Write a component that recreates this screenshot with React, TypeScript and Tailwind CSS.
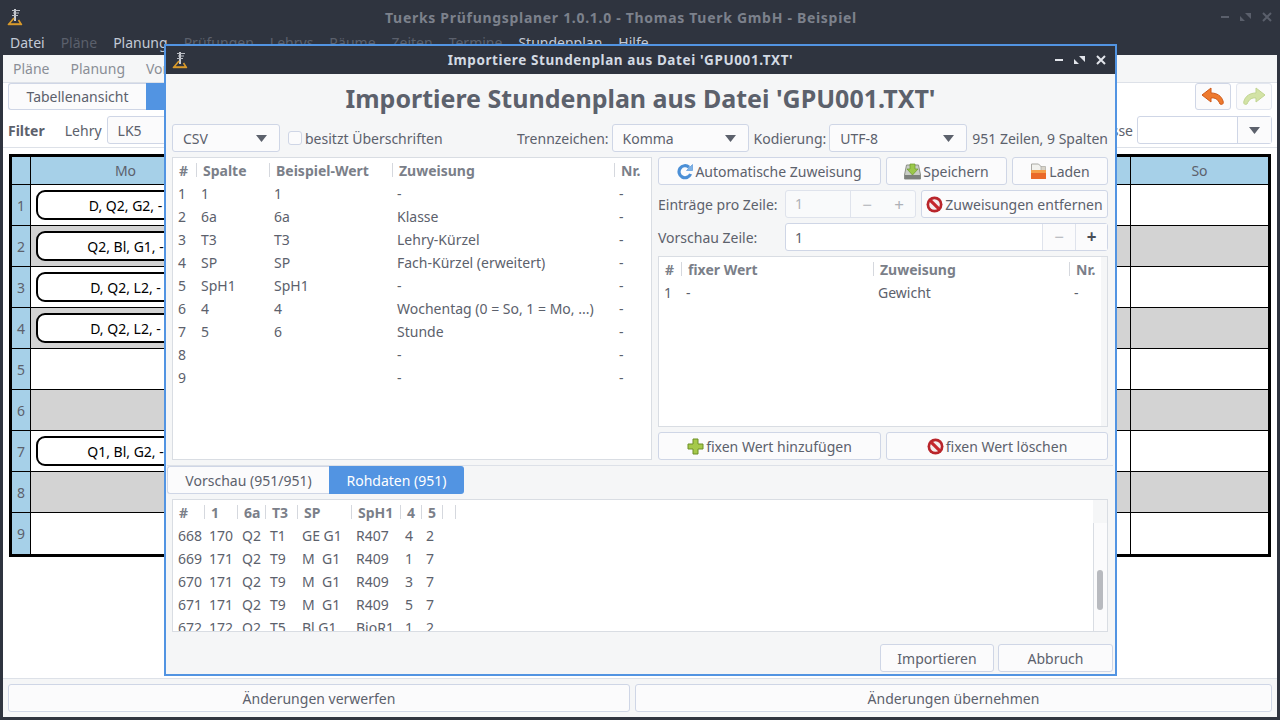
import React from "react";

const menus: [string, boolean][] = [
  ["Datei", true],
  ["Pläne", false],
  ["Planung", true],
  ["Prüfungen", false],
  ["Lehrys", false],
  ["Räume", false],
  ["Zeiten", false],
  ["Termine", false],
  ["Stundenplan", true],
  ["Hilfe", true],
];

const periods: [number, string | null][] = [
  [1, "D, Q2, G2, -"],
  [2, "Q2, Bl, G1, -"],
  [3, "D, Q2, L2, -"],
  [4, "D, Q2, L2, -"],
  [5, null],
  [6, null],
  [7, "Q1, Bl, G2, -"],
  [8, null],
  [9, null],
];

const days = ["Mo", "Di", "Mi", "Do", "Fr", "Sa", "So"];

const columnRows = [
  ["1", "1", "1", "-", "-"],
  ["2", "6a", "6a", "Klasse", "-"],
  ["3", "T3", "T3", "Lehry-Kürzel", "-"],
  ["4", "SP", "SP", "Fach-Kürzel (erweitert)", "-"],
  ["5", "SpH1", "SpH1", "-", "-"],
  ["6", "4", "4", "Wochentag (0 = So, 1 = Mo, ...)", "-"],
  ["7", "5", "6", "Stunde", "-"],
  ["8", "", "", "-", "-"],
  ["9", "", "", "-", "-"],
];

const rawRows = [
  ["668", "170", "Q2", "T1", "GE G1", "R407", "4", "2", ""],
  ["669", "171", "Q2", "T9", "M  G1", "R409", "1", "7", ""],
  ["670", "171", "Q2", "T9", "M  G1", "R409", "3", "7", ""],
  ["671", "171", "Q2", "T9", "M  G1", "R409", "5", "7", ""],
  ["672", "172", "Q2", "T5", "Bl G1", "BioR1", "1", "2", ""],
];

function Logo() {
  return (
    <svg width="16" height="18" viewBox="0 0 16 18" fill="none">
      <path d="M8 1v12" stroke="#c9ccd2" strokeWidth="2" />
      <path d="M5 2.5h8M6 5h6M5 7.5h6" stroke="#b9bcc3" strokeWidth="1.2" />
      <path d="M7 10 2 16h12l-2.5-4" stroke="#d99a2b" strokeWidth="1.6" />
      <path d="M1 16.5h14" stroke="#d99a2b" strokeWidth="1.4" />
    </svg>
  );
}

function WinButtons({ className }: { className: string }) {
  return (
    <div className={`flex items-center gap-[9px] ${className}`}>
      <svg width="12" height="12" viewBox="0 0 12 12" fill="currentColor">
        <rect x="2" y="5" width="8" height="2" />
      </svg>
      <svg width="12" height="12" viewBox="0 0 12 12" fill="currentColor">
        <path d="M6 2h6v6zM0 4l6 6H0z" transform="translate(-1 0)" />
      </svg>
      <svg width="12" height="12" viewBox="0 0 12 12" fill="none" stroke="currentColor" strokeWidth="2">
        <path d="m2 2 8 8M10 2l-8 8" />
      </svg>
    </div>
  );
}

function RefreshIcon() {
  return (
    <svg width="16" height="17" viewBox="0 0 16 17" fill="none">
      <path d="M12 4.2A6 6 0 1 0 13.6 11" stroke="#4b8fd6" strokeWidth="3.2" />
      <path d="M9.5 7.5h6v-6z" fill="#7fb2e5" stroke="#4b8fd6" strokeWidth="0.6" />
    </svg>
  );
}

function SaveIcon() {
  return (
    <svg width="17" height="17" viewBox="0 0 17 17" fill="none">
      <path d="M2.5 2h12l2 10v4H.5v-4z" fill="#c9cdc5" stroke="#8b8f88" />
      <rect x="1" y="12" width="15" height="4" fill="#7c807c" />
      <path d="M6 1h5v5h3l-5.500 6L3 6h3z" fill="#9bc84a" stroke="#6c9a2a" strokeWidth="0.7" />
    </svg>
  );
}

function OpenIcon() {
  return (
    <svg width="17" height="17" viewBox="0 0 17 17" fill="none">
      <path d="M1.500 1h7l3 3v6h-10z" fill="#f2f2ee" stroke="#a9a9a4" />
      <path d="M11 3.500h4.500V8H11z" fill="#d8d3c8" stroke="#a9a9a4" strokeWidth="0.7" />
      <rect x="1" y="7" width="15" height="9" rx="0.5" fill="#ea6a2a" />
      <rect x="1" y="7" width="15" height="3" fill="#f5a04a" />
    </svg>
  );
}

function NoIcon() {
  return (
    <svg width="17" height="17" viewBox="0 0 17 17" fill="none">
      <circle cx="8.500" cy="8.500" r="8" fill="#b9252b" />
      <circle cx="8.500" cy="8.500" r="5.300" fill="#f4eeee" />
      <path d="m4.300 4.300 8.400 8.400" stroke="#c5262c" strokeWidth="3.200" />
    </svg>
  );
}

function PlusIcon() {
  return (
    <svg width="17" height="17" viewBox="0 0 17 17" fill="none">
      <path d="M6 1h5v5h5v5h-5v5H6v-5H1V6h5z" fill="#a5c94a" stroke="#6d8f27" />
    </svg>
  );
}

function ArrowIcon({ fill, stroke, flip }: { fill: string; stroke: string; flip?: boolean }) {
  return (
    <svg width="24" height="20" viewBox="0 0 24 20" fill="none" className={flip ? "-scale-x-100" : ""}>
      <path
        d="M10 1 1 8l9 7v-4c4-.5 7 1 9 6 2 1 4 0 3-3-1.500-5-6-8-12-8z"
        fill={fill}
        stroke={stroke}
        strokeLinejoin="round"
      />
    </svg>
  );
}

function Caret() {
  return (
    <svg width="13" height="7" viewBox="0 0 13 7" fill="#5c616c">
      <path d="M1 0h11L6.500 7z" />
    </svg>
  );
}

function Combo({ value, className }: { value: string; className: string }) {
  return (
    <div className={`flex h-[28px] items-center justify-between rounded-[3px] border border-[#cfd6e6] bg-[#fbfbfc] pl-[10px] pr-[11px] ${className}`}>
      <span>{value}</span>
      <Caret />
    </div>
  );
}

function Btn({ icon, label, className }: { icon?: React.ReactNode; label: string; className: string }) {
  return (
    <div className={`flex h-[28px] items-center justify-center gap-[2px] rounded-[3px] border border-[#cfd6e6] bg-[#fbfbfc] ${className}`}>
      {icon}
      <span>{label}</span>
    </div>
  );
}

function TreeRows({ grid, headers, rows }: { grid: string; headers: string[]; rows: string[][] }) {
  return (
    <>
      <div className={`grid h-[24px] items-center font-bold text-[#7b7f89] ${grid}`}>
        {headers.map((h, i) => (
          <div key={i} className={`flex h-[14px] items-center whitespace-nowrap pl-[6px] ${i > 0 ? "border-l border-[#d5d8de]" : ""}`}>
            {h}
          </div>
        ))}
      </div>
      {rows.map((row, r) => (
        <div key={r} className={`grid h-[23px] items-center ${grid}`}>
          {row.map((c, i) => (
            <div key={i} className="whitespace-pre pl-[5px]">
              {c}
            </div>
          ))}
        </div>
      ))}
    </>
  );
}

function Timetable() {
  return (
    <div className="mx-[6px] mt-[6px] w-[1262px] border-[3px] border-black">
      <div className="grid grid-cols-[19px_190px_repeat(5,182px)_137px]">
        <div className="h-[28px] border-b border-r border-black bg-[#a6d0e8]" />
        {days.map((d, i) => (
          <div key={d} className={`flex h-[28px] items-center justify-center border-b border-black bg-[#a6d0e8] ${i < 6 ? "border-r" : ""}`}>
            {d}
          </div>
        ))}
        {periods.map(([n, pill]) => {
          const shaded = n % 2 === 0;
          const last = n === 9;
          return (
            <React.Fragment key={n}>
              <div className={`flex h-[41px] items-center justify-center border-r border-black bg-[#a6d0e8] ${last ? "" : "border-b"}`}>{n}</div>
              {days.map((d, i) => (
                <div key={d} className={`h-[41px] border-black ${shaded ? "bg-[#d3d3d3]" : "bg-white"} ${last ? "" : "border-b"} ${i < 6 ? "border-r" : ""}`}>
                  {pill && i === 0 && (
                    <div className="mx-[5px] mt-[5px] flex h-[30px] items-center justify-center rounded-[9px] border-2 border-black bg-white text-black">
                      {pill}
                    </div>
                  )}
                </div>
              ))}
            </React.Fragment>
          );
        })}
      </div>
    </div>
  );
}

function ImportDialog() {
  return (
    <div className="absolute left-[164px] top-[44px] flex h-[632px] w-[953px] flex-col border-2 border-[#5294e2] bg-[#f5f6f7]">
      <div className="flex h-[28px] shrink-0 items-center bg-[#2f343f] pl-[6px] pr-[8px]">
        <Logo />
        <div className="flex-1 text-center text-[13.500px] font-bold tracking-[0.6px] text-[#d3dae3]">
          Importiere Stundenplan aus Datei 'GPU001.TXT'
        </div>
        <WinButtons className="text-[#e2e5eb]" />
      </div>

      <div className="flex h-[50px] shrink-0 items-center justify-center text-[25px] font-bold text-[#5c616c]">
        Importiere Stundenplan aus Datei 'GPU001.TXT'
      </div>

      <div className="flex items-center pl-[6px] pr-[7px]">
        <Combo value="CSV" className="w-[108px]" />
        <div className="ml-[8px] h-[14px] w-[14px] rounded-[3px] border border-[#cfd6e6] bg-[#fbfbfc]" />
        <span className="ml-[3px]">besitzt Überschriften</span>
        <span className="ml-auto">Trennzeichen:</span>
        <Combo value="Komma" className="ml-[3px] w-[137px]" />
        <span className="ml-[5px]">Kodierung:</span>
        <Combo value="UTF-8" className="ml-[3px] w-[138px]" />
        <span className="ml-[5px]">951 Zeilen, 9 Spalten</span>
      </div>

      <div className="mt-[5px] flex h-[303px] shrink-0 gap-[6px] pl-[6px] pr-[7px]">
        <div className="w-[480px] overflow-hidden border border-[#d9dde3] bg-white">
          <TreeRows
            grid="grid-cols-[23px_73px_123px_222px_1fr]"
            headers={["#", "Spalte", "Beispiel-Wert", "Zuweisung", "Nr."]}
            rows={columnRows}
          />
        </div>

        <div className="flex flex-1 flex-col gap-[5px]">
          <div className="flex gap-[5px]">
            <Btn icon={<RefreshIcon />} label="Automatische Zuweisung" className="w-[223px]" />
            <Btn icon={<SaveIcon />} label="Speichern" className="w-[121px]" />
            <Btn icon={<OpenIcon />} label="Laden" className="flex-1" />
          </div>
          <div className="flex items-center gap-[5px]">
            <span className="w-[122px]">Einträge pro Zeile:</span>
            <div className="flex h-[28px] w-[131px] items-center rounded-[3px] border border-[#dfe3ec] bg-[#f9fafb] text-[#aeb1b7]">
              <span className="w-[65px] border-r border-[#dfe3ec] pl-[9px] leading-[26px]">1</span>
              <span className="w-[32px] text-center text-[17px] leading-none">−</span>
              <span className="w-[32px] text-center text-[17px] leading-none">+</span>
            </div>
            <Btn icon={<NoIcon />} label="Zuweisungen entfernen" className="flex-1" />
          </div>
          <div className="flex items-center gap-[5px]">
            <span className="w-[122px]">Vorschau Zeile:</span>
            <div className="flex h-[28px] flex-1 items-center rounded-[3px] border border-[#cfd6e6] bg-white">
              <span className="flex-1 pl-[9px]">1</span>
              <span className="flex h-full w-[33px] items-center justify-center border-l border-[#dfe3ec] bg-[#fbfbfc] text-[17px] text-[#aeb1b7]">−</span>
              <span className="flex h-full w-[32px] items-center justify-center border-l border-[#dfe3ec] bg-[#fbfbfc] text-[17px] font-bold text-[#4a4e57]">+</span>
            </div>
          </div>
          <div className="flex h-[171px] border border-[#d9dde3] bg-white">
            <div className="flex-1">
              <TreeRows
                grid="grid-cols-[22px_192px_196px_1fr]"
                headers={["#", "fixer Wert", "Zuweisung", "Nr."]}
                rows={[["1", "-", "Gewicht", "-"]]}
              />
            </div>
            <div className="w-[6px] bg-[#f5f6f7]" />
          </div>
          <div className="flex gap-[5px]">
            <Btn icon={<PlusIcon />} label="fixen Wert hinzufügen" className="w-[223px]" />
            <Btn icon={<NoIcon />} label="fixen Wert löschen" className="flex-1" />
          </div>
        </div>
      </div>

      <div className="ml-[1px] mr-[2px] mt-[5px] h-px bg-[#dde1e8]" />

      <div className="ml-[1px] flex h-[28px] shrink-0">
        <div className="flex w-[162px] items-center justify-center rounded-l-[3px] border border-r-0 border-[#cfd6e6] bg-[#fbfbfc]">
          Vorschau (951/951)
        </div>
        <div className="flex w-[135px] items-center justify-center rounded-r-[3px] bg-[#5294e2] text-white">
          Rohdaten (951)
        </div>
      </div>

      <div className="ml-[6px] mr-[7px] mt-[5px] flex h-[133px] shrink-0 overflow-hidden border border-[#d9dde3] bg-white">
        <div className="flex-1 overflow-hidden">
          <TreeRows
            grid="grid-cols-[31px_33px_28px_32px_54px_49px_21px_21px_13px_1fr]"
            headers={["#", "1", "6a", "T3", "SP", "SpH1", "4", "5", "", ""]}
            rows={rawRows}
          />
        </div>
        <div className="flex w-[14px] flex-col">
          <div className="h-[23px] bg-[#f5f6f7]" />
          <div className="flex-1 border-l border-[#d9dde3] bg-[#fbfbfc] pl-[3px] pt-[47px]">
            <div className="h-[40px] w-[6px] rounded-[3px] bg-[#b8babf]" />
          </div>
        </div>
      </div>

      <div className="mt-[12px] flex justify-end gap-[4px] pr-[2px]">
        <Btn label="Importieren" className="w-[114px]" />
        <Btn label="Abbruch" className="w-[115px]" />
      </div>
    </div>
  );
}

export default function App() {
  return (
    <div className="relative flex h-[720px] w-[1280px] flex-col overflow-hidden bg-[#2f343f] font-['Noto_Sans',sans-serif] text-[14px] text-[#5c616c]">
      <div className="flex h-[34px] shrink-0 items-center pl-[7px] pr-[7px]">
        <Logo />
        <div className="flex-1 text-center text-[14px] font-bold tracking-[0.7px] text-[#7c818c]">
          Tuerks Prüfungsplaner 1.0.1.0 - Thomas Tuerk GmbH - Beispiel
        </div>
        <WinButtons className="text-[#5a5f6b]" />
      </div>

      <div className="flex h-[21px] shrink-0 gap-[16px] pl-[10px] leading-[17px]">
        {menus.map(([m, on]) => (
          <span key={m} className={on ? "text-[#c3cad6]" : "text-[#5b606c]"}>
            {m}
          </span>
        ))}
      </div>

      <div className="mx-[3px] flex h-[662px] shrink-0 flex-col bg-white">
        <div className="flex h-[28px] shrink-0 items-center gap-[21px] border-b border-[#dde1e8] bg-[#f5f6f7] pl-[10px] text-[#8a8e96]">
          <span>Pläne</span>
          <span>Planung</span>
          <span>Vorlagen</span>
        </div>

        <div className="flex h-[65px] shrink-0 flex-col border-b border-[#dde1e8] pl-[5px] pr-[5px]">
          <div className="flex items-center">
            <div className="flex h-[27px] w-[138px] items-center justify-center rounded-l-[3px] border border-r-0 border-[#cfd6e6] bg-[#fbfbfc]">
              Tabellenansicht
            </div>
            <div className="h-[27px] w-[120px] bg-[#5294e2]" />
            <div className="ml-auto flex h-[27px] w-[36px] items-center justify-center rounded-[3px] border border-[#cfd6e6] bg-[#fbfbfc]">
              <ArrowIcon fill="#ee7a2e" stroke="#cf5a1a" />
            </div>
            <div className="ml-[5px] flex h-[27px] w-[36px] items-center justify-center rounded-[3px] border border-[#e2e6ef] bg-[#fbfbfc]">
              <ArrowIcon fill="#d3e3a6" stroke="#c1d592" flip />
            </div>
          </div>
          <div className="mt-[6px] flex items-center">
            <span className="font-bold">Filter</span>
            <span className="ml-[20px]">Lehry</span>
            <Combo value="LK5" className="ml-[5px] w-[200px]" />
            <span className="ml-auto">Klasse</span>
            <div className="ml-[4px] flex h-[28px] w-[135px] rounded-[3px] border border-[#cfd6e6] bg-white">
              <div className="flex-1" />
              <div className="flex w-[34px] items-center justify-center border-l border-[#cfd6e6] bg-[#fbfbfc]">
                <Caret />
              </div>
            </div>
          </div>
        </div>

        <Timetable />

        <div className="mt-auto flex h-[39px] shrink-0 gap-[5px] border-t border-[#dde1e8] bg-[#f5f6f7] px-[5px] pt-[5px]">
          <Btn label="Änderungen verwerfen" className="w-[622px]" />
          <Btn label="Änderungen übernehmen" className="flex-1" />
        </div>
      </div>

      <ImportDialog />
    </div>
  );
}
